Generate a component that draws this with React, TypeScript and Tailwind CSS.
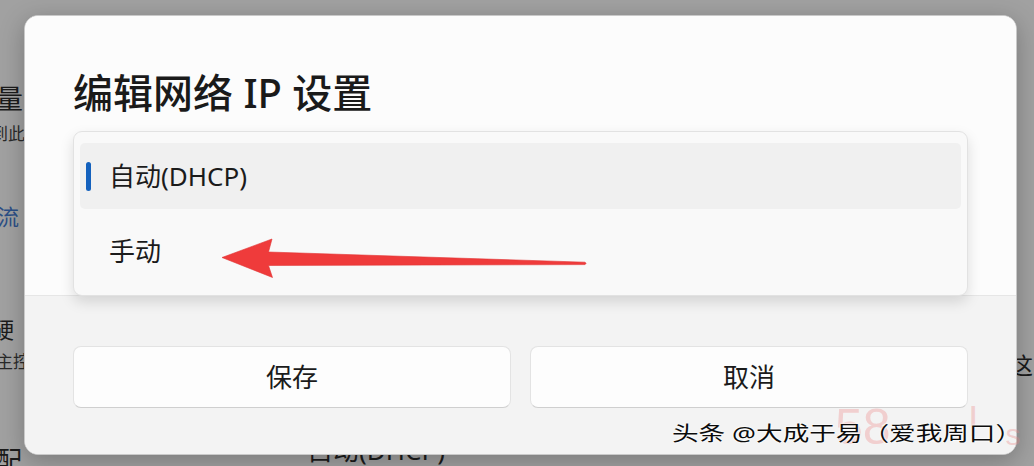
const cjk = "font-['Noto_Sans','Noto_Sans_CJK_SC',sans-serif]";

function Arrow() {
  return (
    <svg className="absolute inset-0 z-20 pointer-events-none" width="1034" height="466" viewBox="0 0 1034 466">
      <path
        d="M222 257.5 L272 239 L268.5 252 L585 262.2 Q587 263.4 585 264.6 L268.5 265.5 L272.5 277.5 Z"
        fill="#ef3b3b"
        stroke="#e03434"
        strokeWidth="0.6"
        strokeLinejoin="round"
      />
    </svg>
  );
}

function Watermark() {
  return (
    <div className="absolute z-20 left-[672px] top-[402px] flex items-end pointer-events-none">
      <div className="absolute left-[163px] top-0 flex items-start text-[50px] leading-none font-light text-[rgba(236,130,130,0.32)] font-['Liberation_Sans',sans-serif]">
        <span>58</span>
        <span className="ml-[78px] text-[40px]">l</span>
        <span className="ml-[28px] text-[30px] mt-[18px]">s</span>
      </div>
      <span
        className={`relative mt-[22px] text-[20px] leading-none text-[#0c0c0c] origin-left scale-x-[1.33] whitespace-nowrap ${cjk} [text-shadow:0_0_2px_#fff,0_0_2px_#fff,0_0_1px_#fff]`}
      >
        头条 @大成于易（爱我周口）
      </span>
    </div>
  );
}

export default function App() {
  return (
    <div className={`relative w-[1034px] h-[466px] overflow-hidden bg-[#a1a1a1] ${cjk} text-[#1b1b1b]`}>
      {/* settings page behind the dimmed overlay */}
      <div className="flex h-full">
        <div className="w-[307px] shrink-0 flex flex-col items-start whitespace-nowrap">
          <span className="mt-[85px] ml-[-4px] text-[27px] leading-none">量</span>
          <span className="mt-[13px] ml-[-9px] text-[17px] leading-none text-[#2a2a2a]">到此</span>
          <span className="mt-[63px] ml-[-3px] text-[22px] leading-none text-[#2c4f86]">流</span>
          <span className="mt-[91px] ml-[-8px] text-[22px] leading-none">硬</span>
          <span className="mt-[13px] ml-[-4px] text-[17px] leading-none text-[#2a2a2a]">主控</span>
          <span className="mt-[77px] ml-[-5px] text-[27px] leading-none">配</span>
        </div>
        <div className="flex-1">
          <div className="mt-[437px] text-[26px] leading-none whitespace-nowrap">自动(DHCP)</div>
        </div>
        <div className="w-[18px] shrink-0 whitespace-nowrap">
          <div className="mt-[354px] ml-[-6px] text-[23px] leading-none">这</div>
        </div>
      </div>

      {/* dialog */}
      <div className="absolute left-[24px] top-[15px] w-[993px] h-[440px] rounded-[14px] overflow-hidden border border-[#c9c9c9] bg-[#fbfbfb] shadow-[0_6px_24px_rgba(0,0,0,0.25)] flex flex-col">
        <div className="relative z-10 h-[279px] shrink-0 px-[48px] pt-[57px] bg-[#fcfcfc]">
          <h1 className="text-[40px] leading-none font-medium text-[#1a1a1a] whitespace-nowrap">编辑网络 IP 设置</h1>
          <div className="mt-[18px] h-[165px] rounded-[9px] border border-[#e2e2e2] bg-[#f9f9f9] shadow-[0_6px_14px_rgba(0,0,0,0.13)] px-[6px] pt-[11px] flex flex-col gap-[9px]">
            <div className="h-[66px] rounded-[5px] bg-[#f0f0f0] flex items-center">
              <div className="ml-[6px] w-[5px] h-[29px] rounded-full bg-[#1461bd]" />
              <span className="ml-[18px] text-[26px] leading-none">自动(DHCP)</span>
            </div>
            <div className="h-[66px] rounded-[5px] flex items-center pl-[29px]">
              <span className="text-[26px] leading-none">手动</span>
            </div>
          </div>
        </div>
        <div className="flex-1 bg-[#f3f3f3] border-t border-[#e6e6e6] px-[48px] pt-[50px]">
          <div className="flex gap-[19px]">
            <button className="flex-1 h-[62px] rounded-[8px] border border-[#e3e3e3] border-b-[#cfcfcf] bg-[#fdfdfd] text-[26px] leading-none text-[#1b1b1b]">
              保存
            </button>
            <button className="flex-1 h-[62px] rounded-[8px] border border-[#e3e3e3] border-b-[#cfcfcf] bg-[#fdfdfd] text-[26px] leading-none text-[#1b1b1b]">
              取消
            </button>
          </div>
        </div>
      </div>

      <Arrow />
      <Watermark />
    </div>
  );
}
